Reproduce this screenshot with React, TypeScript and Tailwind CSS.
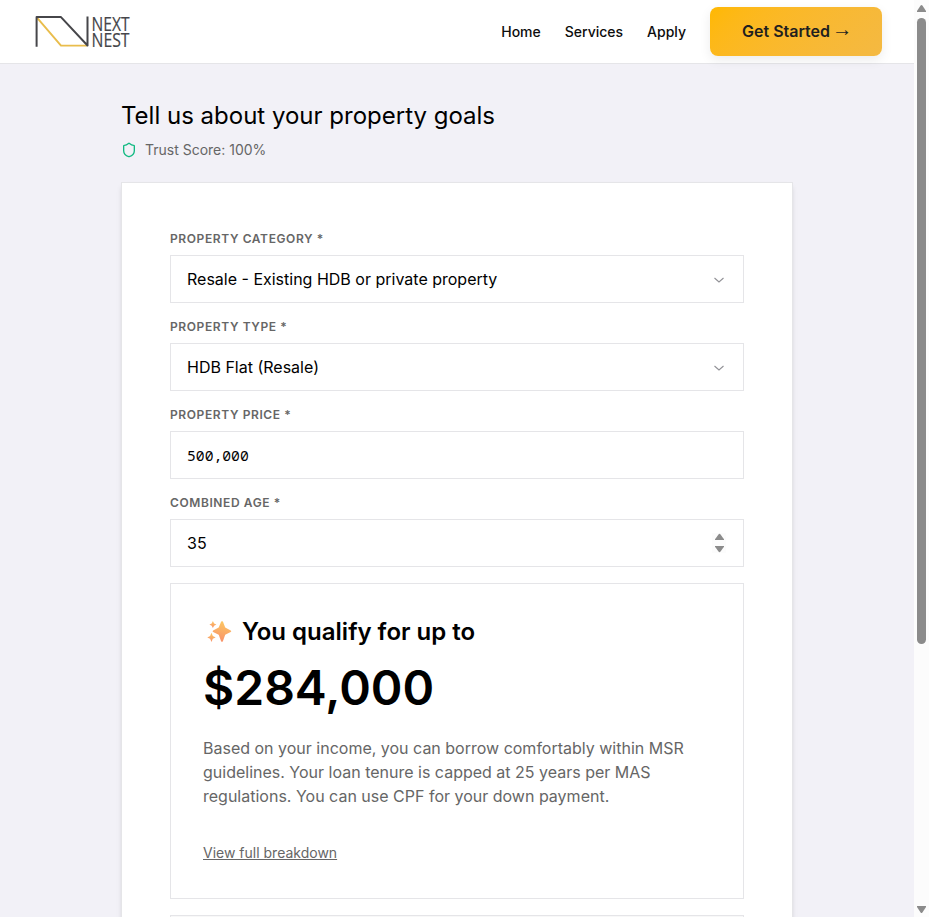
import type { ReactNode } from "react";

function Logo() {
  return (
    <svg width="102" height="52" viewBox="0 -8 102 52" className="block overflow-visible" aria-label="Next Nest">
      <g fill="none" strokeLinejoin="round" strokeLinecap="butt">
        <path d="M5.4 4.2 L29 31.600 H55" stroke="#e9bd4c" strokeWidth="1.9" />
        <path d="M4.600 32.800 V3.100 H29 L55.500 31.500 V2.500" stroke="#46464a" strokeWidth="2" />
      </g>
      <g fill="#46464a" stroke="#46464a" strokeWidth="0.2" fontFamily="'Open Sans', 'Noto Sans', sans-serif" fontSize="20" fontWeight="400">
        <text x="59.500" y="17" textLength="38" lengthAdjust="spacingAndGlyphs">NEXT</text>
        <text x="59.500" y="33.400" textLength="38" lengthAdjust="spacingAndGlyphs">NEST</text>
      </g>
    </svg>
  );
}

function Sparkles() {
  return (
    <svg width="26" height="24" viewBox="-0.7 -0.4 26 24" className="block">
      <defs>
        <linearGradient id="spark" x1="0.6" y1="0" x2="0.4" y2="1">
          <stop offset="0" stopColor="#fcc863" />
          <stop offset="1" stopColor="#f9916a" />
        </linearGradient>
      </defs>
      <g fill="url(#spark)">
        <path d="M14.5 1.2 Q15.4 0.4 16.2 1.2 L18.5 7.2 L24 10 Q25.2 10.8 24 11.7 L18.5 14.4 L16.2 20.8 Q15.3 21.9 14.4 20.8 L12 14.4 L6.4 11.7 Q5.3 10.8 6.4 10 L12 7.2 Z" />
        <path d="M6.2 0.7 L7.4 3 L9.7 4.1 L7.4 5.3 L6.2 7.7 L5 5.3 L2.7 4.1 L5 3 Z" />
        <path d="M4.8 12.4 L6.1 15.6 L9 17 L6.1 18.4 L4.8 21.6 L3.4 18.4 L0.6 17 L3.4 15.6 Z" />
      </g>
    </svg>
  );
}

function Chevron() {
  return (
    <svg width="12" height="12" viewBox="0 0 12 12" fill="none" className="mr-[2px] mt-px">
      <path d="M1.5 4 L6 8 L10.5 4" stroke="#919196" strokeWidth="1.1" />
    </svg>
  );
}

function Spinner() {
  return (
    <svg width="14" height="20" viewBox="0 0 14 20" className="mr-px block">
      <rect width="14" height="20" fill="#fcfcfc" />
      <path d="M3 7 V6.200 L6.500 1.400 Q7.500 0.200 8.500 1.400 L12 6.200 V7 Z" fill="#8b8b8b" />
      <path d="M3 13 V13.800 L6.500 18.600 Q7.500 19.800 8.500 18.600 L12 13.800 V13 Z" fill="#8b8b8b" />
    </svg>
  );
}

function Field({ label, children }: { label: string; children: ReactNode }) {
  return (
    <div>
      <div className="mb-2 text-xs font-semibold uppercase tracking-[0.6px] text-[#666666]">{label}</div>
      <div className="flex h-12 items-center justify-between border border-[#e5e5e8] bg-white px-4 text-base text-black">
        {children}
      </div>
    </div>
  );
}

export default function App() {
  return (
    <div className="flex h-[917px] w-full overflow-hidden bg-[#f2f1f7] font-['Inter',sans-serif] text-black">
      <div className="min-w-0 flex-1">
        <header className="flex h-16 items-center justify-between border-b border-[#e5e5e8] bg-white pl-8 pr-8">
          <Logo />
          <nav className="flex items-center gap-6 text-sm font-medium text-[#0d0d0d]">
            <a>Home</a>
            <a>Services</a>
            <a>Apply</a>
            <button className="flex h-[49px] w-[172px] items-center rounded-lg bg-linear-135 from-[#ffb800] to-[#f4b942] pb-[2px] pl-8 text-base font-semibold text-[#1f1f1f] shadow-[0_4px_12px_rgba(0,0,0,0.08)]">
              <span>Get Started</span>
              <span className="-mt-[3px] ml-[2px] font-['Liberation_Sans',sans-serif] text-[20.500px] font-normal leading-none">→</span>
            </button>
          </nav>
        </header>

        <main className="mx-auto w-[672px] pt-9">
          <h1 className="text-2xl font-normal">Tell us about your property goals</h1>
          <div className="mt-2 flex h-5 items-center gap-2 text-sm text-[#666666]">
            <svg width="16" height="16" viewBox="0 0 24 24" fill="none" stroke="#10b981" strokeWidth="2" strokeLinecap="round" strokeLinejoin="round">
              <path d="M20 13c0 5-3.5 7.5-7.66 8.95a1 1 0 0 1-.67-.01C7.5 20.5 4 18 4 13V6a1 1 0 0 1 1-1c2 0 4.500-1.200 6.240-2.720a1.170 1.170 0 0 1 1.520 0C14.510 3.810 17 5 19 5a1 1 0 0 1 1 1z" />
            </svg>
            <span>Trust Score: 100%</span>
          </div>

          <section className="mt-[22px] h-[900px] border border-[#e5e5e8] bg-white p-12 shadow-[0_4px_6px_-1px_rgba(0,0,0,0.1),0_2px_4px_-2px_rgba(0,0,0,0.1)]">
            <div className="flex flex-col gap-4">
              <Field label="Property Category *">
                <span>Resale - Existing HDB or private property</span>
                <Chevron />
              </Field>
              <Field label="Property Type *">
                <span>HDB Flat (Resale)</span>
                <Chevron />
              </Field>
              <Field label="Property Price *">
                <span className="font-['Noto_Sans_Mono','DejaVu_Sans_Mono',monospace] text-[14.7px] leading-6">500,000</span>
              </Field>
              <Field label="Combined Age *">
                <span>35</span>
                <Spinner />
              </Field>

              <div className="h-[316px] border border-[#e5e5e8] p-8">
                <h3 className="flex items-center gap-[10px] pl-[3px] text-2xl font-semibold">
                  <Sparkles />
                  <span>You qualify for up to</span>
                </h3>
                <div className="mt-4 text-5xl font-semibold">$284,000</div>
                <p className="mt-6 text-base text-[#666666]">
                  Based on your income, you can borrow comfortably within MSR guidelines. Your loan tenure is capped at 25 years per MAS regulations. You can use CPF for your down payment.
                </p>
                <a className="mt-[35px] block text-sm text-[#666666] underline">View full breakdown</a>
              </div>
              <div className="h-40 border border-[#e5e5e8] bg-[#f8f8f8]" />
            </div>
          </section>
        </main>
      </div>

      <div className="flex w-[15px] shrink-0 flex-col items-center bg-[#fcfcfc] pr-px">
        <svg width="9" height="7" viewBox="0 0 9 7" className="mt-[5px]">
          <path d="M0 7 V6 L3.6 0.6 Q4.5 -0.4 5.400 0.6 L9 6 V7 Z" fill="#8b8b8b" />
        </svg>
        <div className="mt-[6px] h-[626px] w-[9px] rounded-full bg-[#8b8b8b]" />
        <svg width="9" height="7" viewBox="0 0 9 7" className="mb-[4px] mt-auto">
          <path d="M0 0 V1 L3.600 6.400 Q4.500 7.400 5.400 6.400 L9 1 V0 Z" fill="#8b8b8b" />
        </svg>
      </div>
    </div>
  );
}
